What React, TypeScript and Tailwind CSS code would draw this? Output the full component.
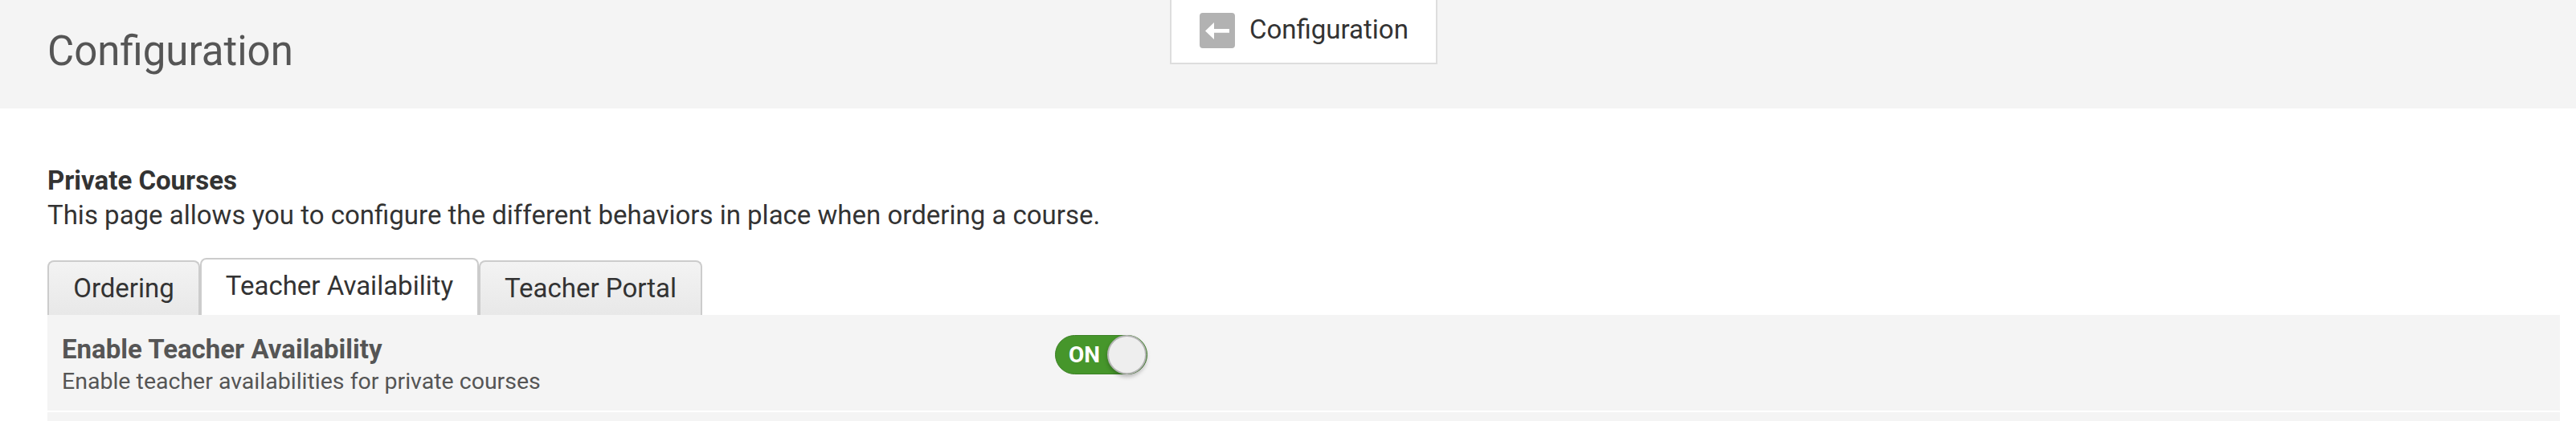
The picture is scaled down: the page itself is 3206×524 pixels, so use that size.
export default function App() {
  const font = { fontFamily: 'Roboto, sans-serif' };
  return (
    <div className="w-[3206px] h-[524px] overflow-hidden bg-white font-['Roboto',sans-serif]" style={font}>
      <div className="relative h-[135px] bg-[#f4f4f4] pl-[59px] pt-[33px]">
        <h1 className="text-[51px] leading-[61px] font-normal text-[#555555]">Configuration</h1>
        <div className="absolute left-[1456px] top-0 w-[333px] h-[80px] bg-white border-2 border-t-0 border-[#dddddd] flex items-center pl-[35px] pb-[2px]">
          <span className="w-[44px] h-[44px] rounded-[4px] bg-[#b2b2b2] flex items-center justify-center mr-[18px]">
            <svg width="30" height="21" viewBox="0 0 30 21" fill="white"><path d="M0 10.5 L11 0 V8 H30 V12.7 H11 V21 Z" /></svg>
          </span>
          <span className="text-[33px] leading-[40px] text-[#333333] mt-[-2px]">Configuration</span>
        </div>
      </div>
      <div className="pl-[59px] pr-[20px] pt-[69px]">
        <div className="text-[33px] leading-[42px] font-bold text-[#333333]">Private Courses</div>
        <div className="text-[33px] leading-[44px] text-[#333333]">This page allows you to configure the different behaviors in place when ordering a course.</div>
        <div className="flex items-end h-[71px] mt-[31px]">
          <div className="w-[190px] h-[68px] rounded-t-[8px] border-2 border-b-0 border-[#cccccc] bg-gradient-to-b from-[#f3f3f3] to-[#e8e8e8] flex items-center justify-center text-[33px] text-[#333333]">Ordering</div>
          <div className="w-[347px] h-[71px] rounded-t-[8px] border-2 border-b-0 border-[#cccccc] bg-white flex items-center justify-center text-[33px] text-[#333333] pb-[4px]">Teacher Availability</div>
          <div className="w-[278px] h-[68px] rounded-t-[8px] border-2 border-b-0 border-[#cccccc] bg-gradient-to-b from-[#f3f3f3] to-[#e8e8e8] flex items-center justify-center text-[33px] text-[#333333]">Teacher Portal</div>
        </div>
        <div className="h-[119px] bg-[#f4f4f4] flex pl-[18px]">
          <div className="w-[1236px] pt-[24px]">
            <div className="text-[33px] leading-[38px] font-bold text-[#555555]">Enable Teacher Availability</div>
            <div className="text-[28.5px] leading-[42px] text-[#555555]">Enable teacher availabilities for private courses</div>
          </div>
          <div className="relative mt-[25px] w-[115px] h-[49px] rounded-full bg-[#46962b] border border-[#3c8025] flex items-center pl-[16px]">
            <span className="text-[28px] font-bold text-white">ON</span>
            <span className="absolute right-0 top-[-1px] w-[49px] h-[49px] rounded-full bg-[#eeeeee] border-2 border-[#b5b5b5] shadow-[0_3px_5px_rgba(0,0,0,0.25)]"></span>
          </div>
        </div>
        <div className="h-[12px] mt-[2px] bg-[#f4f4f4]"></div>
      </div>
    </div>
  );
}
